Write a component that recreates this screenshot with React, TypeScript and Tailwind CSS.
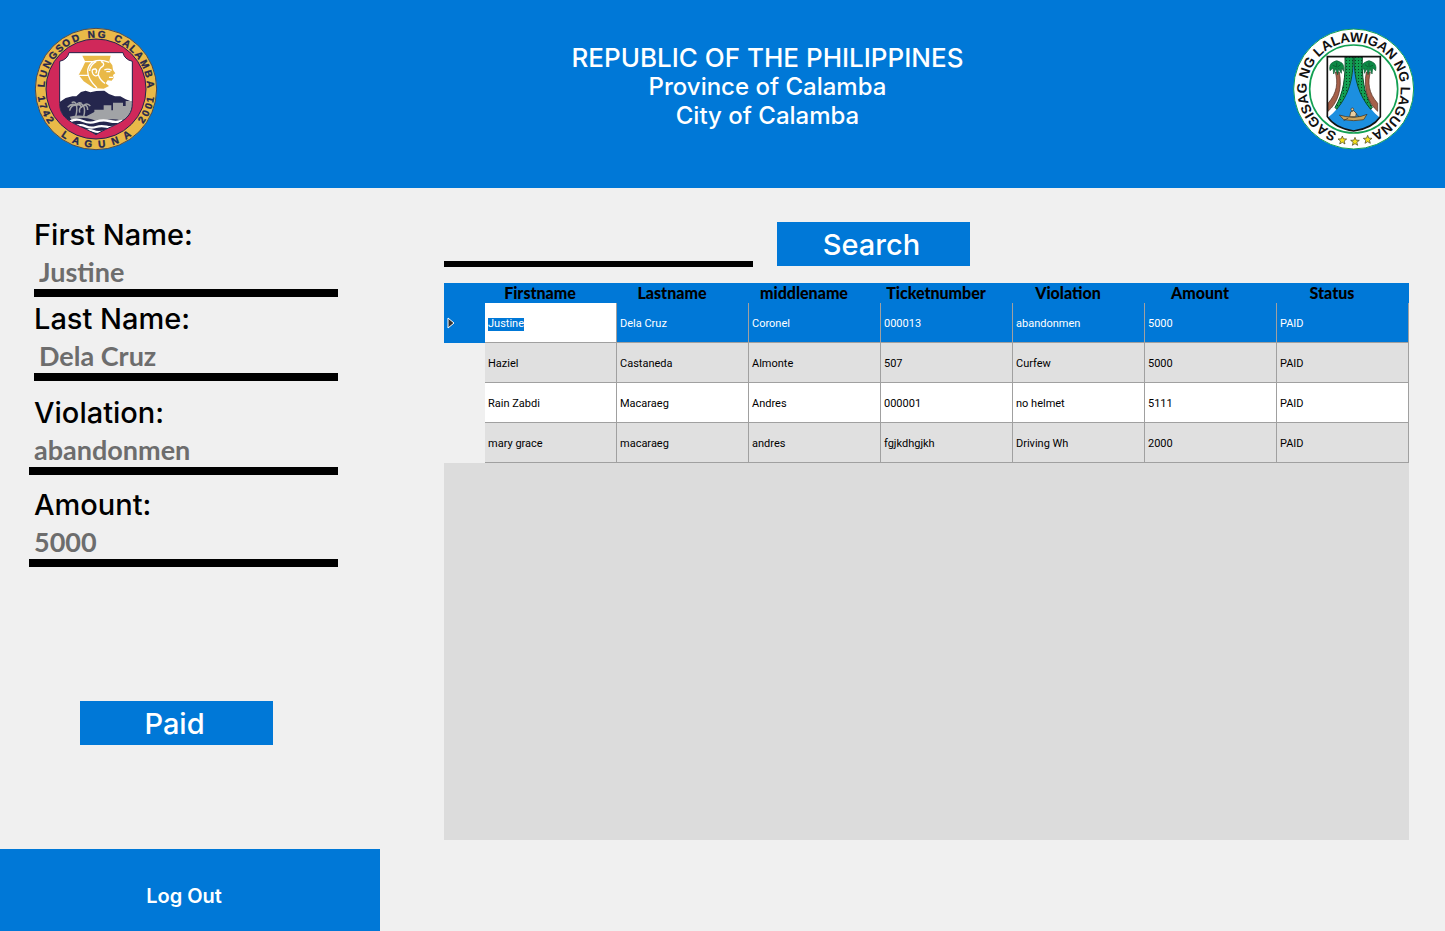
import { useState } from "react";

type Glyph = [string, number];

const calambaTop: Glyph[] = [
  ["L", -85], ["U", -74], ["N", -63], ["G", -52], ["S", -42], ["O", -33], ["D", -22],
  ["N", -5], ["G", 6],
  ["C", 24], ["A", 34], ["L", 43], ["A", 52], ["M", 63], ["B", 74], ["A", 85],
];

const calambaBottom: Glyph[] = [
  ["1", 80], ["7", 72], ["4", 64], ["2", 56],
  ["L", 34], ["A", 21], ["G", 8], ["U", -6], ["N", -20], ["A", -34],
  ["2", -56], ["0", -64], ["0", -72], ["1", -79],
];

function CalambaSeal() {
  return (
    <svg viewBox="24 18 378 378" className="size-[126px]" role="img" aria-label="City seal">
      <defs>
        <clipPath id="calamba-shield">
          <path d="M132 98H294Q298 118 322 124V250C322 308 262 312 213 344C164 312 104 308 104 250V124Q128 118 132 98Z" />
        </clipPath>
      </defs>
      <circle cx="213" cy="207" r="182" fill="#e9b948" stroke="#4a4a52" strokeWidth="3" />
      <circle cx="213" cy="207" r="150" fill="#d0285a" stroke="#25264d" strokeWidth="3" />
      <g clipPath="url(#calamba-shield)">
        <rect x="100" y="90" width="226" height="260" fill="#fff" />
        <path
          d="M104 246L122 234L142 229L154 229L168 216L182 212L196 217L214 213L238 212L252 222L270 229L286 229L302 238L322 245V350H104Z"
          fill="#25264d"
        />
        <path
          d="M134 290Q160 284 184 289L208 276V269H236V256H259V271H264V248H294V258H302V243H322V284L290 302Q262 294 240 302Q222 308 200 298Q170 288 140 301Z"
          fill="#a1a3a6"
        />
        <path
          d="M152 290Q158 268 154 256M176 290Q182 268 175 257M154 256Q140 248 128 262M154 256Q138 254 134 272M154 256Q166 250 170 264M154 256Q152 242 140 248M154 256Q160 244 170 250M175 257Q160 262 164 278M175 257Q188 252 188 270M175 257Q186 246 196 258M175 257Q168 248 160 256"
          fill="none"
          stroke="#a1a3a6"
          strokeWidth="4.5"
        />
        <path
          d="M136 304Q154 294 174 303T213 305T252 303T292 303"
          fill="none"
          stroke="#fff"
          strokeWidth="7"
        />
        <path
          d="M150 319Q166 312 182 319T213 321T244 320T276 318"
          fill="none"
          stroke="#fff"
          strokeWidth="7"
        />
        <path d="M178 334Q192 326 206 333T248 331" fill="none" stroke="#fff" strokeWidth="6" />
      </g>
      <path
        d="M132 98H294Q298 118 322 124V250C322 308 262 312 213 344C164 312 104 308 104 250V124Q128 118 132 98Z"
        fill="none"
        stroke="#25264d"
        strokeWidth="3"
      />
      <path
        d="M172 107H257L253 124L262 136L264 150L271 160L264 165L266 174L260 182L248 181L242 190L252 198L236 206L206 204L176 184L161 165L174 140L181 125Z"
        fill="#e9b948"
      />
      <path
        d="M174 125H203Q188 138 188 154Q188 178 216 204M204 125Q226 116 253 127M214 124Q194 136 194 153M228 124Q244 132 229 142Q222 148 220 164Q210 172 204 162Q196 146 212 147Q218 152 212 160M220 164Q226 182 240 190M161 166L190 166M238 150Q248 144 260 151M244 155H256M252 172H264"
        fill="none"
        stroke="#fff"
        strokeWidth="4"
      />
      <g
        fill="#25264d"
        stroke="#25264d"
        strokeWidth="1"
        textAnchor="middle"
        className="font-['Liberation_Sans',sans-serif] text-[30px] font-bold"
      >
        {calambaTop.map(([char, angle]) => (
          <text key={angle} x="213" y="53" transform={`rotate(${angle} 213 207)`}>
            {char}
          </text>
        ))}
        {calambaBottom.map(([char, angle]) => (
          <text key={angle} x="213" y="383" transform={`rotate(${angle} 213 207)`}>
            {char}
          </text>
        ))}
      </g>
    </svg>
  );
}

const star = "M0 -13L3.5 -4.5L13 -4L5.5 2L8 11L0 6L-8 11L-5.5 2L-13 -4L-3.5 -4.5Z";

function Palm() {
  return (
    <g>
      <path
        d="M-4 18C4 50 2 80 -26 112V136C2 112 18 70 8 18Z"
        fill="#a5604a"
        stroke="#4d2a20"
        strokeWidth="2"
      />
      <path
        d="M-20 14Q-24 -6 -10 -12Q0 -20 10 -12Q24 -8 21 16L15 6L14 22L6 8L3 26L-3 8L-9 24L-11 6Z"
        fill="#0d8a46"
        stroke="#0b5c33"
        strokeWidth="2"
      />
      <path d="M-12 -2L-2 2M12 -4L3 3M0 -10V4" stroke="#0b4a2a" strokeWidth="2" />
    </g>
  );
}

function LagunaSeal() {
  return (
    <svg viewBox="21 18 378 378" className="size-[126px]" role="img" aria-label="Province seal">
      <defs>
        <path id="laguna-ring" d="M206 348A141 141 0 0 1 206 66A141 141 0 0 1 206 348" />
        <clipPath id="laguna-shield">
          <path d="M127 110H286V290Q262 325 206 333Q150 325 127 290Z" />
        </clipPath>
        <pattern id="laguna-dots" width="9" height="9" patternUnits="userSpaceOnUse">
          <rect width="9" height="9" fill="#12a052" />
          <rect x="3" y="3" width="3" height="3" fill="#0a3d22" />
        </pattern>
      </defs>
      <circle cx="206" cy="207" r="180" fill="#fff" stroke="#12a052" strokeWidth="3" />
      <circle cx="206" cy="207" r="132" fill="#fff" stroke="#12a052" strokeWidth="5" />
      <g clipPath="url(#laguna-shield)">
        <rect x="127" y="110" width="159" height="230" fill="#fff" />
        <path d="M206 110C206 200 172 260 127 294V340H286V294C244 260 206 200 206 110Z" fill="#1c8fe0" />
        <path
          d="M180 110H205C205 180 190 226 155 268L150 262C176 220 182 170 180 110Z"
          fill="url(#laguna-dots)"
          stroke="#064d2a"
          strokeWidth="3"
        />
        <path
          d="M232 110H207C207 180 222 226 257 268L262 262C236 220 230 170 232 110Z"
          fill="url(#laguna-dots)"
          stroke="#064d2a"
          strokeWidth="3"
        />
        <g transform="translate(155 138)">
          <Palm />
        </g>
        <g transform="translate(252 138) scale(-1 1)">
          <Palm />
        </g>
      </g>
      <path
        d="M163 285Q180 291 206 292Q230 291 246 283L236 299Q206 305 176 299Z"
        fill="#c9a45c"
        stroke="#3a2a18"
        strokeWidth="2"
      />
      <path d="M194 290L197 276L206 272L214 280L212 290Z" fill="#e8cfa0" stroke="#3a2a18" strokeWidth="2" />
      <circle cx="202" cy="268" r="4" fill="#e8cfa0" stroke="#3a2a18" strokeWidth="2" />
      <path d="M212 280L222 290M190 294L176 302" stroke="#3a2a18" strokeWidth="2" />
      <path
        d="M127 110H286V290Q262 325 206 333Q150 325 127 290Z"
        fill="none"
        stroke="#111"
        strokeWidth="5"
      />
      <g fill="#f6e11c" stroke="#3b3a1c" strokeWidth="2">
        <path d={star} transform="translate(172 361)" />
        <path d={star} transform="translate(210 365)" />
        <path d={star} transform="translate(248 359)" />
      </g>
      <text fill="#111" className="font-['Liberation_Sans',sans-serif] text-[41px] font-bold">
        <textPath href="#laguna-ring" startOffset="51">
          SAGISAG NG LALAWIGAN NG LAGUNA
        </textPath>
      </text>
    </svg>
  );
}

type FieldProps = { id: string; label: string; value: string; wide?: boolean };

function Field({ id, label, value, wide = false }: FieldProps) {
  return (
    <div className={wide ? "pl-[29px]" : "pl-[34px]"}>
      <label
        htmlFor={id}
        className={`block text-[29px] leading-9 font-medium text-black ${wide ? "pl-[5px]" : ""}`}
      >
        {label}
      </label>
      <input
        id={id}
        defaultValue={value}
        className="block h-11 w-full border-b-8 border-black bg-transparent pl-[5px] font-['Lato',sans-serif] text-[27px] font-bold text-[#6d6d6d] outline-none"
      />
    </div>
  );
}

const columns = ["Firstname", "Lastname", "middlename", "Ticketnumber", "Violation", "Amount", "Status"];

const records = [
  ["Justine", "Dela Cruz", "Coronel", "000013", "abandonmen", "5000", "PAID"],
  ["Haziel", "Castaneda", "Almonte", "507", "Curfew", "5000", "PAID"],
  ["Rain Zabdi", "Macaraeg", "Andres", "000001", "no helmet", "5111", "PAID"],
  ["mary grace", "macaraeg", "andres", "fgjkdhgjkh", "Driving Wh", "2000", "PAID"],
];

const rowStyles = [
  "bg-[#0078d7] text-white",
  "bg-[#e0e0e0] text-black",
  "bg-white text-black",
  "bg-[#e0e0e0] text-black",
];

function RecordsTable() {
  const [editing, setEditing] = useState(records[0][0]);
  return (
    <table className="w-full table-fixed border-separate border-spacing-0">
      <thead>
        <tr className="h-5 bg-[#0078d7]">
          <th className="w-[41px] p-0" />
          {columns.map((name) => (
            <th
              key={name}
              className="p-0 pr-[22px] text-center font-['Lato',sans-serif] text-[16px] leading-5 font-black text-black"
            >
              {name}
            </th>
          ))}
        </tr>
      </thead>
      <tbody className="font-['Roboto',sans-serif] text-[11px]">
        {records.map((record, row) => (
          <tr key={record[0]} className={`h-10 ${rowStyles[row]}`}>
            <th className={`p-0 pl-[3px] ${row === 0 ? "bg-[#0078d7]" : "bg-[#f0f0f0]"}`}>
              {row === 0 && (
                <svg viewBox="0 0 8 12" className="h-3 w-2">
                  <path d="M1 1V11L7 6Z" fill="#333" stroke="#fff" strokeWidth="1" />
                </svg>
              )}
            </th>
            {record.map((cell, col) => (
              <td
                key={columns[col]}
                className={`border-r border-b border-[#a0a0a0] p-0 pt-[3px] pl-[3px] ${row === 0 && col === 0 ? "bg-white" : ""}`}
              >
                {row === 0 && col === 0 ? (
                  <input
                    aria-label="Firstname"
                    value={editing}
                    onChange={(event) => setEditing(event.target.value)}
                    className="block field-sizing-content h-[13px] bg-[#0078d7] text-white outline-none"
                  />
                ) : (
                  cell
                )}
              </td>
            ))}
          </tr>
        ))}
      </tbody>
    </table>
  );
}

export default function App() {
  return (
    <div className="flex min-h-screen flex-col bg-[#f0f0f0] font-['Inter',sans-serif]">
      <header className="flex items-start justify-between bg-[#0078d7] pt-[26px] pr-[27px] pb-9 pl-[33px]">
        <CalambaSeal />
        <h1 className="pt-[17px] pl-[84px] text-center text-[24px] leading-[29px] font-medium text-white">
          <span className="block text-[26px]">REPUBLIC OF THE PHILIPPINES</span>
          <span className="block">Province of Calamba</span>
          <span className="block">City of Calamba</span>
        </h1>
        <LagunaSeal />
      </header>

      <div className="flex flex-1">
        <aside className="flex w-[380px] shrink-0 flex-col">
          <form className="flex flex-col pt-[29px] pr-[42px]" onSubmit={(event) => event.preventDefault()}>
            <div className="flex flex-col gap-1">
              <Field id="first-name" label="First Name:" value="Justine" />
              <Field id="last-name" label="Last Name:" value="Dela Cruz" />
            </div>
            <div className="mt-[14px] flex flex-col gap-3">
              <Field id="violation" label="Violation:" value="abandonmen" wide />
              <Field id="amount" label="Amount:" value="5000" wide />
            </div>
            <button className="mt-[134px] ml-20 h-11 w-[193px] bg-[#0078d7] pt-0.5 pr-1 text-[29px] leading-9 font-medium text-white">
              Paid
            </button>
          </form>
          <button className="mt-auto h-[82px] w-full bg-[#0078d7] pt-3 pr-3 text-[20px] font-semibold text-white">
            Log Out
          </button>
        </aside>

        <main className="flex min-w-0 flex-1 flex-col pt-[34px] pr-9 pb-[91px] pl-16">
          <div className="flex items-start gap-6">
            <input
              aria-label="Search records"
              className="h-[45px] w-[309px] border-b-[6px] border-black bg-transparent text-[24px] outline-none"
            />
            <button className="h-11 w-[193px] bg-[#0078d7] pt-0.5 pr-1 text-[29px] leading-9 font-medium text-white">
              Search
            </button>
          </div>
          <div className="mt-4 flex-1 bg-[#dcdcdc]">
            <RecordsTable />
          </div>
        </main>
      </div>
    </div>
  );
}
